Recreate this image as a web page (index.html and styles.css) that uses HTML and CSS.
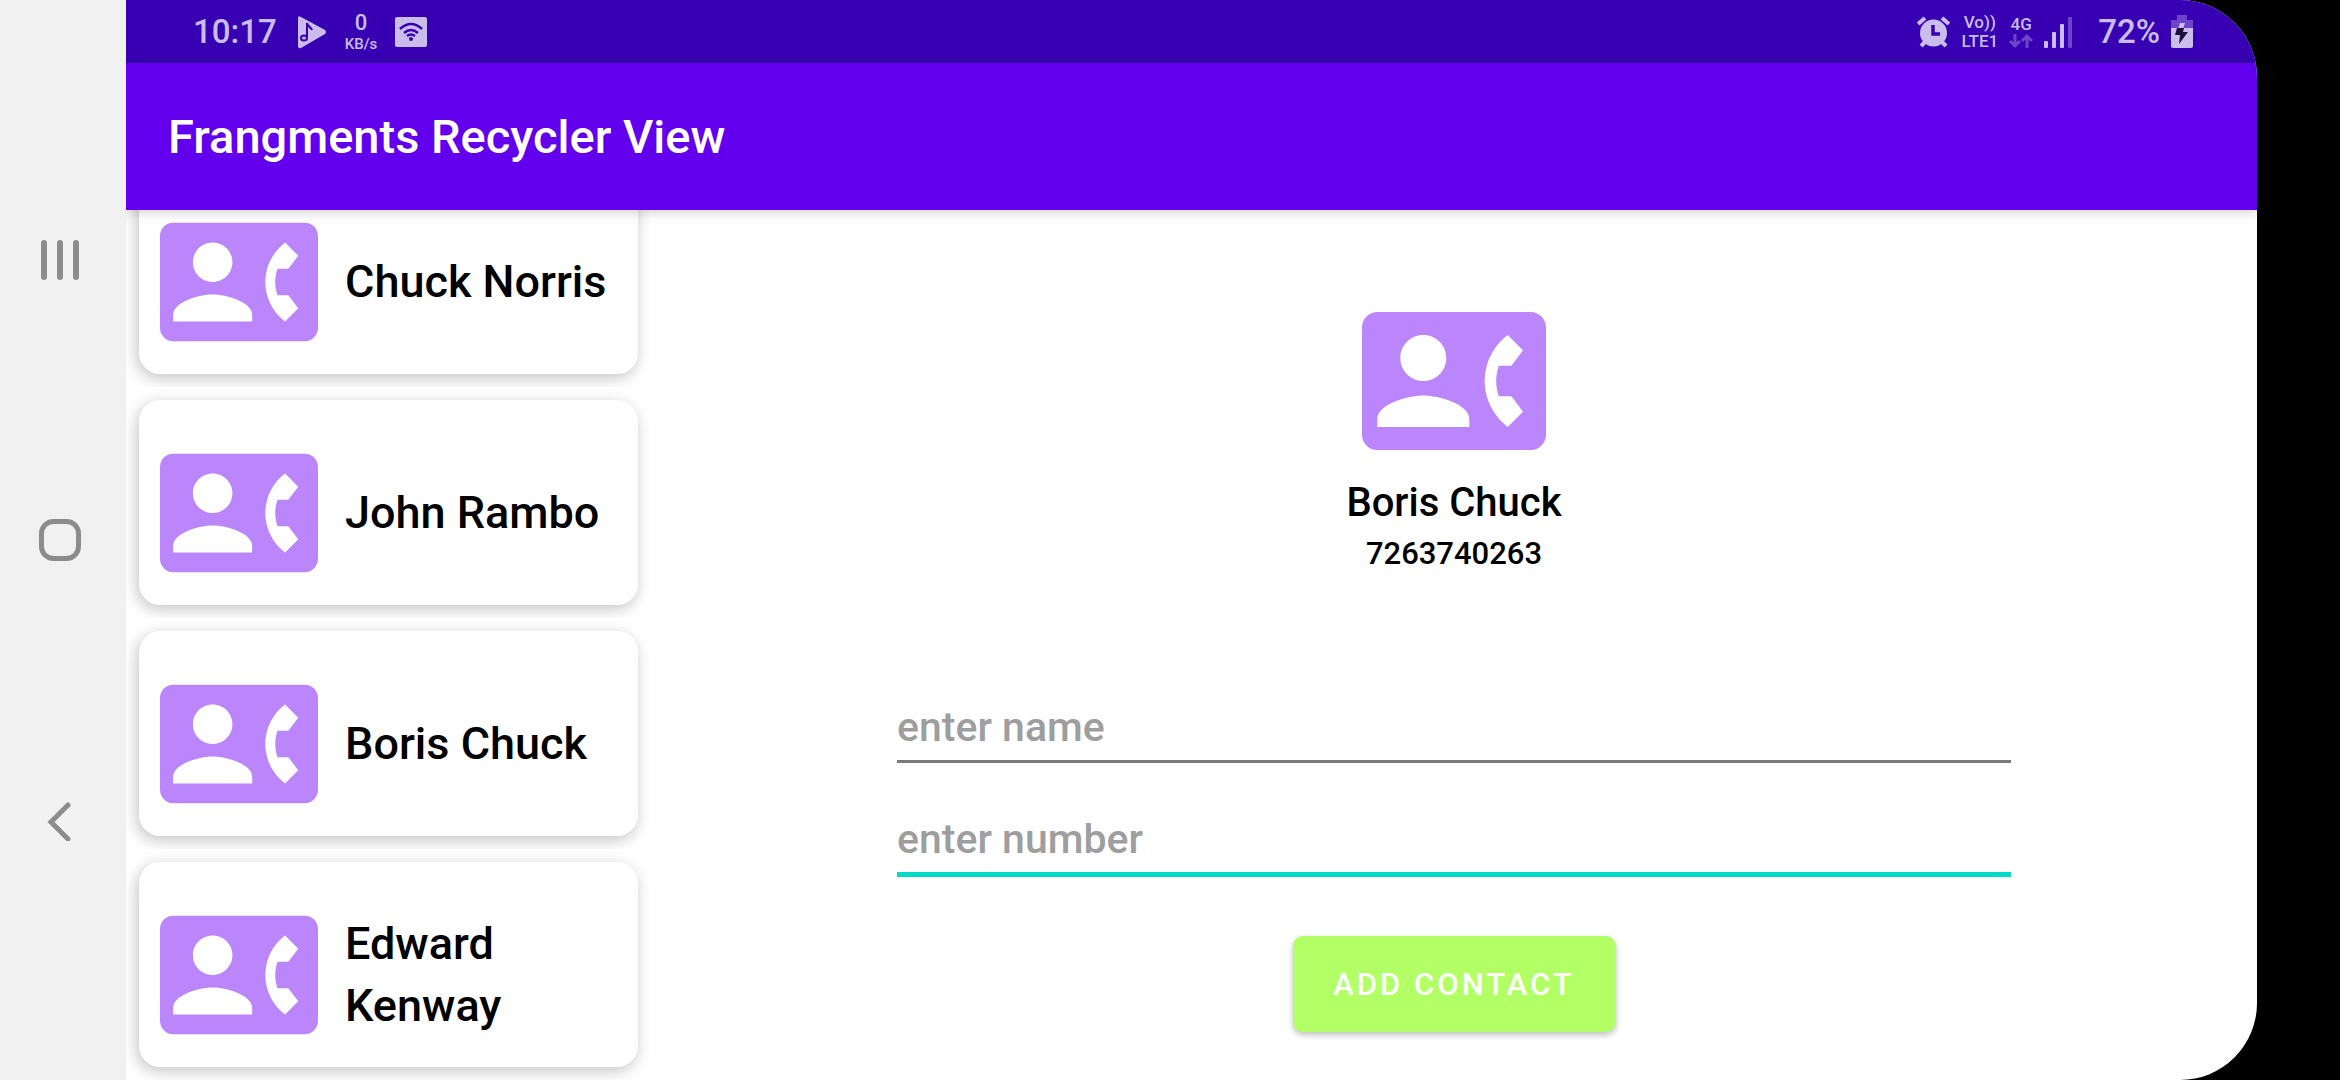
FILE: index.html
```
<!DOCTYPE html>
<html lang="en">
<head>
  <meta charset="utf-8">
  <meta name="viewport" content="width=device-width, initial-scale=1">
  <title>Frangments Recycler View</title>
  <link rel="stylesheet" href="styles.css">
</head>
<body>
  <svg class="sprite" aria-hidden="true">
    <symbol id="contact" viewBox="0 0 24 24">
      <path d="M22 3H2C.9 3 0 3.9 0 5v14c0 1.100.9 2 2 2h20c1.100 0 2-.9 2-2V5c0-1.100-.9-2-2-2zM8 6c1.660 0 3 1.340 3 3s-1.340 3-3 3-3-1.340-3-3 1.340-3 3-3zm6 12H2v-1c0-2 4-3.100 6-3.100s6 1.100 6 3.100v1zm3.850-4h1.640L21 16l-1.990 1.990c-1.310-.98-2.280-2.380-2.730-3.990-.18-.64-.28-1.310-.28-2s.1-1.360.28-2c.45-1.620 1.420-3.010 2.730-3.990L21 8l-1.510 2h-1.640c-.22.630-.35 1.300-.35 2s.13 1.370.35 2z"/>
    </symbol>
  </svg>

  <nav class="navbar" aria-label="System navigation">
    <button class="navbar__button" aria-label="Recent apps">
      <svg width="42" height="40" viewBox="0 0 42 40"><path d="M5 3v34M21 3v34M37 3v34" fill="none" stroke="#8c8c8c" stroke-width="6" stroke-linecap="round"/></svg>
    </button>
    <button class="navbar__button" aria-label="Home">
      <svg width="42" height="42" viewBox="0 0 42 42"><rect x="2.500" y="2.500" width="37" height="37" rx="12" fill="none" stroke="#8c8c8c" stroke-width="5"/></svg>
    </button>
    <button class="navbar__button" aria-label="Back">
      <svg width="42" height="40" viewBox="0 0 42 40"><path d="M29 4 12 21l17 17" fill="none" stroke="#8c8c8c" stroke-width="5" stroke-linecap="round"/></svg>
    </button>
  </nav>

  <div class="app">
    <div class="status">
      <div class="status__group status__group--start">
        <span class="status__main status__main--clock">10:17</span>
        <svg width="30" height="34" viewBox="0 0 30 34"><path d="M1 3Q1 0 4 2L28 15q2 2 0 4L4 33q-3 1-3-2z" fill="#cabdec"/><path d="M10 23V8c1 4 4 4 5 7" fill="none" stroke="#3700b3" stroke-width="2"/><ellipse cx="7" cy="23" rx="3" ry="2.500" fill="none" stroke="#3700b3" stroke-width="2"/></svg>
        <span class="status__stack"><span class="status__speed">0</span><span class="status__unit">KB/s</span></span>
        <svg width="32" height="30" viewBox="0 0 32 30"><rect width="32" height="30" rx="2" fill="#cabdec"/><path d="M5 12q11-10 22 0M9 16q7-6 14 0M12 19q4-3 8 0" fill="none" stroke="#3700b3" stroke-width="2.500"/><circle cx="16" cy="22" r="2" fill="#3700b3"/></svg>
      </div>
      <div class="status__group status__group--end">
        <svg width="33" height="32" viewBox="0 0 33 32"><g stroke="#cabdec"><path d="M1 8l7-6M32 8l-7-6" stroke-width="4"/><path d="M8 26l-4 4M25 26l4 4" stroke-width="4"/></g><circle cx="16.500" cy="17" r="13.500" fill="#cabdec"/><path d="M16 9v9h7" fill="none" stroke="#3700b3" stroke-width="3.500"/></svg>
        <span class="status__stack"><span class="status__net">Vo))</span><span class="status__net">LTE1</span></span>
        <span class="status__stack"><span class="status__net">4G</span>
          <svg width="24" height="15" viewBox="0 0 24 15"><path d="M6 0v11M1 7l5 5 5-5M18 14V3M13 7l5-5 5 5" fill="none" stroke="#6e44ca" stroke-width="3"/></svg></span>
        <svg width="28" height="32" viewBox="0 0 28 32"><g fill="#cabdec"><rect y="25" width="4" height="7" rx="1"/><rect x="8" y="16" width="4" height="16" rx="1"/><rect x="16" y="8" width="4" height="24" rx="1"/></g><rect x="24" y="1" width="4" height="31" rx="1" fill="#6e44ca"/></svg>
        <span class="status__main status__main--battery">72%</span>
        <svg width="22" height="33" viewBox="0 0 22 33"><path d="M6 0h10v5h6v8H0V5h6z" fill="#6e44ca"/><path d="M0 13h22v18q0 2-2 2H2q-2 0-2-2z" fill="#cabdec"/><path d="M9 8h5l-2 6h-5z" fill="#cabdec"/><path d="M6 13h7l-1 4h5L8 29l1-9H4z" fill="#1b0f3c"/></svg>
      </div>
    </div>

    <header class="appbar"><h1 class="appbar__title">Frangments Recycler View</h1></header>

    <main class="content">
      <div class="contacts">
        <ul class="contacts__list">
          <li class="contacts__item"><a class="card" href="#"><svg class="card__icon"><use href="#contact"/></svg><span class="card__name">Chuck Norris</span></a></li>
          <li class="contacts__item"><a class="card" href="#"><svg class="card__icon"><use href="#contact"/></svg><span class="card__name">John Rambo</span></a></li>
          <li class="contacts__item"><a class="card" href="#"><svg class="card__icon"><use href="#contact"/></svg><span class="card__name">Boris Chuck</span></a></li>
          <li class="contacts__item"><a class="card" href="#"><svg class="card__icon"><use href="#contact"/></svg><span class="card__name">Edward Kenway</span></a></li>
        </ul>
      </div>

      <section class="detail">
        <svg class="detail__icon"><use href="#contact"/></svg>
        <h2 class="detail__name">Boris Chuck</h2>
        <p class="detail__number">7263740263</p>
        <form class="form">
          <input class="form__input" type="text" placeholder="enter name" aria-label="Name">
          <input class="form__input form__input--active" type="tel" placeholder="enter number" aria-label="Number">
          <button class="form__submit" type="button">ADD CONTACT</button>
        </form>
      </section>
    </main>
  </div>
</body>
</html>
```
FILE: styles.css
```
* {
  box-sizing: border-box;
}

body {
  display: flex;
  height: 100vh;
  margin: 0;
  padding-right: 83px;
  overflow: hidden;
  background: #000;
  color: #000;
  font-family: Roboto, "Liberation Sans", sans-serif;
  font-weight: 500;
}

svg {
  display: block;
  flex: none;
}

.sprite {
  position: absolute;
  width: 0;
  height: 0;
}

/* System navigation */
.navbar {
  display: flex;
  flex: 0 0 126px;
  flex-direction: column;
  align-items: center;
  justify-content: space-evenly;
  padding-right: 6px;
  background: #f1f1f1;
}

.navbar__button {
  padding: 0;
  border: 0;
  background: none;
}

.app {
  display: flex;
  flex: 1;
  flex-direction: column;
  min-width: 0;
  overflow: hidden;
  border-radius: 0 77px 77px 0;
  background: #fff;
}

/* Status bar */
.status {
  display: flex;
  flex: 0 0 63px;
  align-items: center;
  justify-content: space-between;
  padding: 0 64px 0 67px;
  background: #3700b3;
  color: #cabdec;
}

.status__group {
  display: flex;
  align-items: center;
}

.status__group--start {
  gap: 18px;
}

.status__group--end {
  gap: 11px;
}

.status__main {
  font-size: 33px;
  line-height: 40px;
}

.status__main--clock {
  padding-right: 2px;
}

.status__main--battery {
  padding-left: 15px;
}

.status__stack {
  display: flex;
  flex-direction: column;
  align-items: center;
}

.status__speed {
  font-size: 22px;
  line-height: 24px;
}

.status__unit {
  font-size: 15px;
  line-height: 18px;
}

.status__net {
  font-size: 17px;
  line-height: 19px;
}

/* App bar */
.appbar {
  display: flex;
  position: relative;
  z-index: 1;
  flex: 0 0 147px;
  align-items: center;
  padding: 0 42px;
  background: #6200ee;
  box-shadow: 0 2px 12px rgba(0, 0, 0, 0.2);
}

.appbar__title {
  margin: 0;
  color: #fff;
  font-size: 47px;
  font-weight: 500;
  line-height: 62px;
}

.content {
  display: flex;
  flex: 1;
  min-height: 0;
}

/* Contact list */
.contacts {
  flex: 0 0 525px;
  overflow: hidden;
}

/* The list rests part-way through its first card */
.contacts__list {
  margin: -54px 0 0;
  padding: 0;
  list-style: none;
}

.contacts__item {
  padding: 13px;
  overflow: hidden;
}

.card {
  display: flex;
  gap: 27px;
  align-items: center;
  padding: 34px 21px 13px;
  border-radius: 21px;
  background: #fff;
  box-shadow: -2px 4px 16px rgba(0, 0, 0, 0.24);
  color: inherit;
  text-decoration: none;
}

.card__icon {
  width: 158px;
  height: 158px;
  fill: #bb86fc;
}

.card__name {
  font-size: 45px;
  line-height: 62px;
}

/* Contact detail */
.detail {
  display: flex;
  flex: 1;
  flex-direction: column;
  align-items: center;
  padding: 79px 246px 0;
}

.detail__icon {
  width: 184px;
  height: 184px;
  fill: #bb86fc;
}

.detail__name {
  margin: 2px 0 0;
  font-size: 40px;
  font-weight: 500;
  line-height: 56px;
}

.detail__number {
  margin: 0;
  font-size: 31px;
  line-height: 46px;
}

.form {
  display: flex;
  flex-direction: column;
  align-self: stretch;
  align-items: center;
  margin-top: 120px;
}

.form__input {
  width: 100%;
  height: 66px;
  margin-bottom: 46px;
  padding: 0 0 3px;
  border: 0;
  border-bottom: 3px solid #7a7a7a;
  outline: 0;
  background: none;
  color: #000;
  font-family: inherit;
  font-size: 41px;
  font-weight: 500;
}

.form__input--active {
  height: 68px;
  margin-bottom: 59px;
  border-bottom: 5px solid #03dac5;
}

.form__input::placeholder {
  color: #9e9e9e;
  opacity: 1;
}

.form__submit {
  width: 323px;
  height: 96px;
  padding: 0;
  border: 0;
  border-radius: 10px;
  background: #b2ff66;
  box-shadow: 0 3px 6px rgba(0, 0, 0, 0.25);
  color: #fff;
  font-family: inherit;
  font-size: 31px;
  font-weight: 500;
  letter-spacing: 3px;
}
```
